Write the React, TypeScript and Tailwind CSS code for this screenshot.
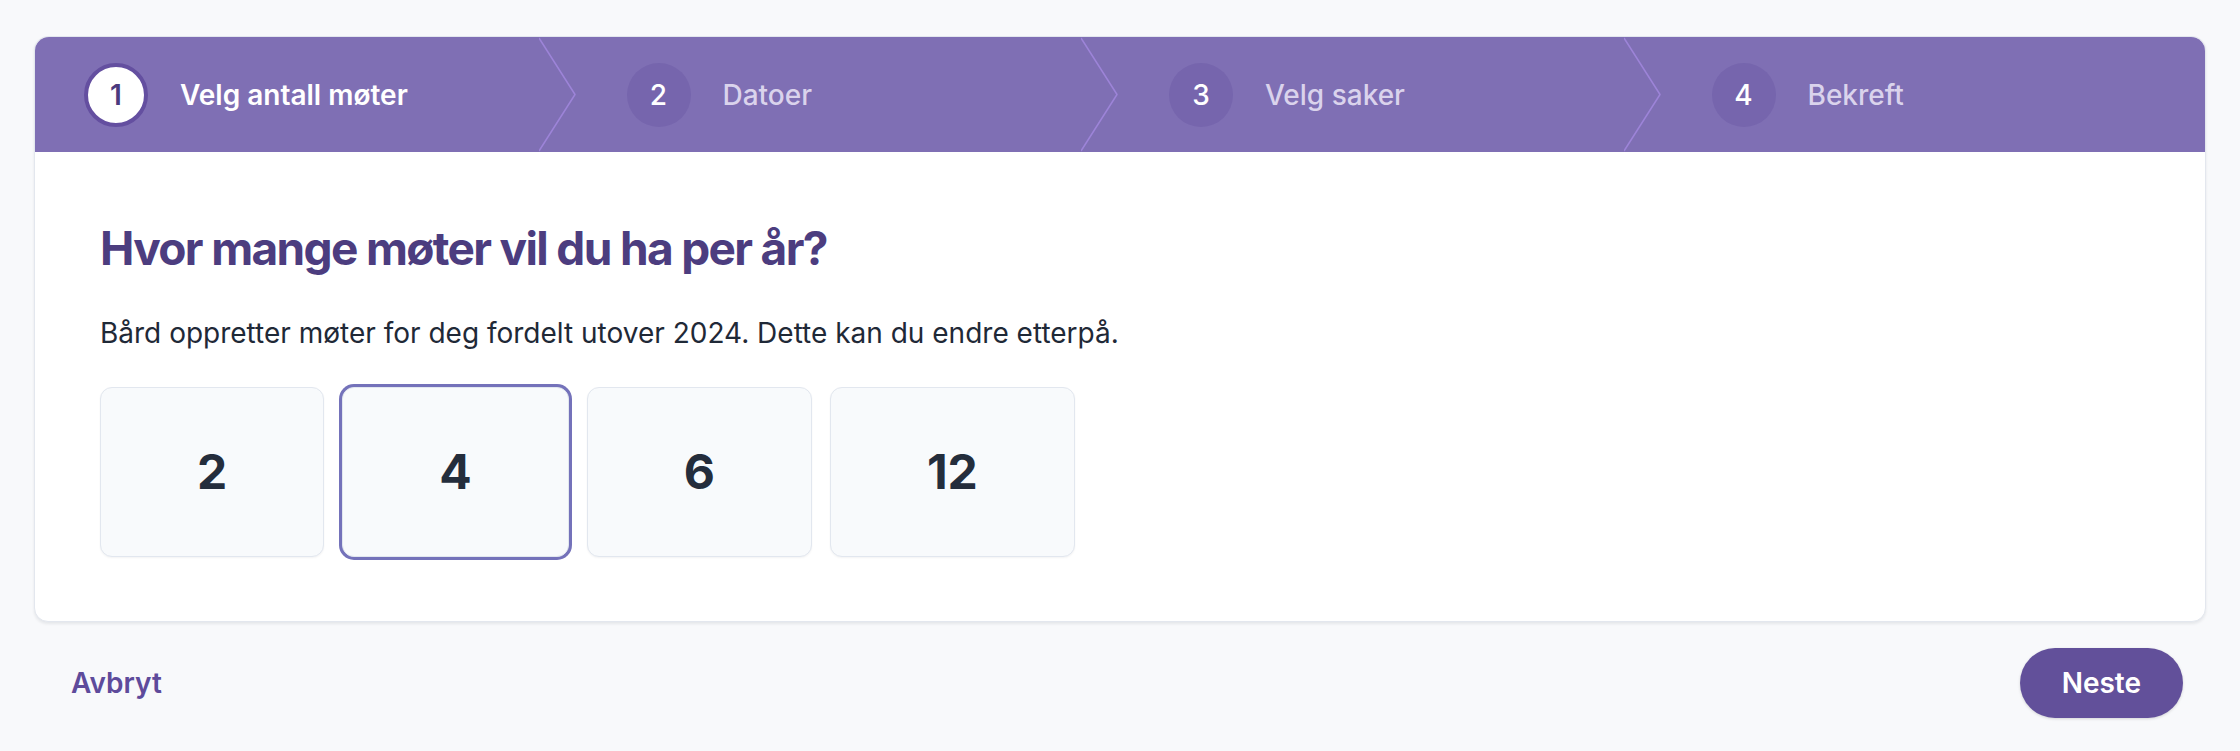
import { useState } from "react";

const steps = [
  { id: 1, name: "Velg antall møter" },
  { id: 2, name: "Datoer" },
  { id: 3, name: "Velg saker" },
  { id: 4, name: "Bekreft" },
];

const options = [2, 4, 6, 12];

function Stepper({ current }: { current: number }) {
  return (
    <div className="flex h-[115px] rounded-t-[14px] bg-[#7f6fb4]">
      {steps.map((step, i) => {
        const active = step.id === current;
        return (
          <div key={step.id} className="relative flex flex-1 items-center pl-[49px]">
            {active ? (
              <span className="flex size-[64px] items-center justify-center rounded-full border-[4px] border-[#644fa0] bg-white text-[28px] font-semibold text-[#4b3a7e]">
                {step.id}
              </span>
            ) : (
              <span className="flex size-[64px] items-center justify-center rounded-full bg-[#7665ad] text-[28px] font-medium text-white">
                {step.id}
              </span>
            )}
            <span
              className={
                active
                  ? "ml-[32px] text-[28px] font-semibold text-white"
                  : "ml-[32px] text-[28px] font-medium text-[#dad3ec]"
              }
            >
              {step.name}
            </span>
            {i < steps.length - 1 && (
              <div className="absolute right-[2px] top-0 h-full w-[37px]" aria-hidden="true">
                <svg className="h-full w-full text-[#9d84d8]" viewBox="0 0 37 115" fill="none" preserveAspectRatio="none">
                  <path d="M0 1L36 57.5L0 114" stroke="currentColor" strokeWidth="1.5" strokeLinejoin="round" />
                </svg>
              </div>
            )}
          </div>
        );
      })}
    </div>
  );
}

export default function App() {
  const [selected, setSelected] = useState(4);

  return (
    <div className="min-h-[751px] bg-[#f8f9fb] px-[34px] pt-[36px] font-['Inter',sans-serif]">
      <div className="rounded-[14px] border border-[#e3e7ee] bg-white shadow-[0_2px_3px_rgba(15,23,42,0.08)]">
        <Stepper current={1} />
        <div className="px-[65px] pb-[64px] pt-[68px]">
          <h1 className="text-[46px] font-bold leading-[56px] tracking-[-0.036em] text-[#4c3d7f]">
            Hvor mange møter vil du ha per år?
          </h1>
          <p className="mt-[37px] text-[28px] leading-[40px] text-[#1f2937]">
            Bård oppretter møter for deg fordelt utover 2024. Dette kan du endre etterpå.
          </p>
          <div className="mt-[34px] flex gap-[18px]">
            {options.map((n) => (
              <button
                key={n}
                onClick={() => setSelected(n)}
                className={
                  n === selected
                    ? "flex h-[170px] items-center justify-center rounded-[12px] border-[1.5px] border-[#e2e7ef] bg-[#f8fafc] px-[96px] text-[48px] font-bold text-[#242d3c] shadow-[0_0_0_3px_#7472ba]"
                    : "flex h-[170px] items-center justify-center rounded-[12px] border-[1.5px] border-[#e2e7ef] bg-[#f8fafc] px-[96px] text-[48px] font-bold text-[#242d3c] shadow-[0_1px_2px_rgba(15,23,42,0.05)]"
                }
              >
                {n}
              </button>
            ))}
          </div>
        </div>
      </div>
      <div className="flex items-center justify-between pb-[34px] pl-[37px] pr-[23px] pt-[26px]">
        <button className="text-[28px] font-semibold text-[#5e4b9b]">Avbryt</button>
        <button className="h-[70px] rounded-full bg-[#62509a] px-[42px] text-[28px] font-semibold text-white shadow-[0_1px_3px_rgba(0,0,0,0.15)]">
          Neste
        </button>
      </div>
    </div>
  );
}
